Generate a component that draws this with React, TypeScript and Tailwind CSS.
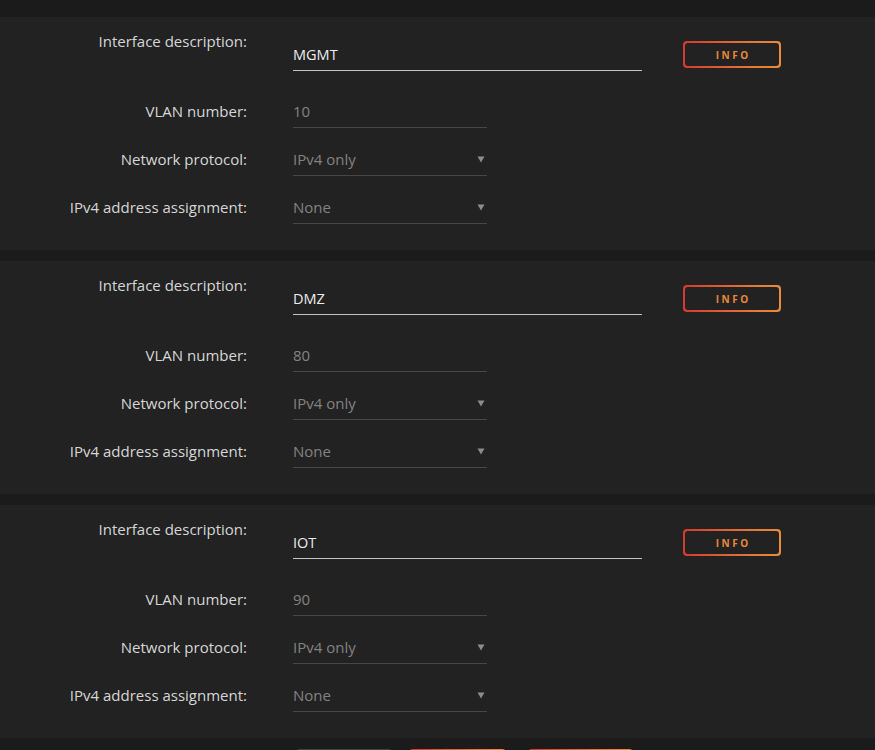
import React from "react";

const font = { fontFamily: '"Open Sans", "Noto Sans", sans-serif' };

function Arrow() {
  return (
    <svg width="8" height="7" viewBox="0 0 8 7" className="shrink-0">
      <path d="M0.5 0.5 L7.5 0.5 L4 6.5 Z" fill="#8c8c8c" />
    </svg>
  );
}

function Row({ label, children }: { label: string; children: React.ReactNode }) {
  return (
    <div className="flex items-center">
      <div className="w-[247px] pb-[3px] text-right text-[15px] leading-[20px] text-[#d6d6d6]">{label}</div>
      <div className="ml-[46px]">{children}</div>
    </div>
  );
}

function Panel({ name, vlan }: { name: string; vlan: string }) {
  return (
    <div className="bg-[#222222] h-[233px] pt-[14px]">
      <div className="flex items-start">
        <div className="w-[247px] text-right text-[15px] leading-[20px] text-[#d6d6d6]">Interface description:</div>
        <div className="ml-[46px] mt-[8px] w-[349px] h-[32px] border-b border-[#c4c4c4] flex items-center text-[14.5px] text-[#ececec]">
          {name}
        </div>
        <div className="ml-[41px] mt-[10px] w-[98px] h-[27px] rounded-[4px] p-[2px] bg-gradient-to-r from-[#d5392f] to-[#ea8d3b]">
          <div className="w-full h-full rounded-[3px] bg-[#222222] flex items-center justify-center">
            <span className="text-[10px] font-bold tracking-[2.6px] pl-[2.6px] text-[#e8893a] leading-none">INFO</span>
          </div>
        </div>
      </div>
      <div className="mt-[25px] flex flex-col gap-[16px]">
        <Row label="VLAN number:">
          <div className="w-[194px] h-[32px] border-b border-[#474747] flex items-center text-[15px] text-[#828282]">{vlan}</div>
        </Row>
        <Row label="Network protocol:">
          <div className="w-[194px] h-[32px] border-b border-[#474747] flex items-center justify-between pr-[2px] text-[15px] text-[#828282]">
            <span>IPv4 only</span>
            <Arrow />
          </div>
        </Row>
        <Row label="IPv4 address assignment:">
          <div className="w-[194px] h-[32px] border-b border-[#474747] flex items-center justify-between pr-[2px] text-[15px] text-[#828282]">
            <span>None</span>
            <Arrow />
          </div>
        </Row>
      </div>
    </div>
  );
}

export default function App() {
  return (
    <div className="bg-[#1b1b1b] min-h-[750px] pt-[17px] flex flex-col" style={font}>
      <div className="flex flex-col gap-[11px]">
        <Panel name="MGMT" vlan="10" />
        <Panel name="DMZ" vlan="80" />
        <Panel name="IOT" vlan="90" />
      </div>
      <div className="flex pt-[11px] pl-[296px] gap-[17px]">
        <div className="w-[96px] h-[32px] rounded-[4px] border-2 border-[#444444]" />
        <div className="w-[97px] h-[32px] rounded-[4px] p-[2px] bg-gradient-to-r from-[#d5392f] to-[#ea8d3b]">
          <div className="w-full h-full rounded-[3px] bg-[#1b1b1b]" />
        </div>
        <div className="ml-[5px] w-[105px] h-[32px] rounded-[4px] p-[2px] bg-gradient-to-r from-[#d5392f] to-[#ea8d3b]">
          <div className="w-full h-full rounded-[3px] bg-[#1b1b1b]" />
        </div>
      </div>
    </div>
  );
}
